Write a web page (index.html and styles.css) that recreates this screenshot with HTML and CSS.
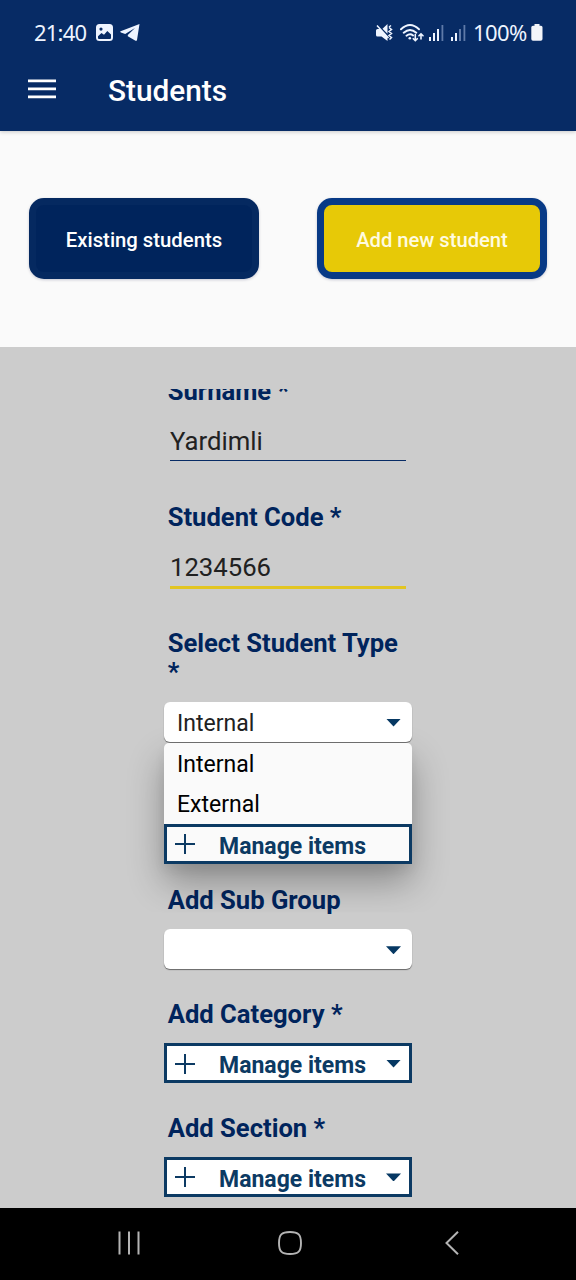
FILE: index.html
```html
<!DOCTYPE html>
<html lang="en">
<head>
<meta charset="utf-8">
<title>Students</title>
<link rel="stylesheet" href="styles.css">
</head>
<body>
<div class="screen">
  <header class="header">
    <div class="status">
      <div class="status-left">
        <span class="clock">21:40</span>
        <svg class="ico-image" width="17" height="17" viewBox="0 0 17 17"><path fill="#eef4ff" fill-rule="evenodd" d="M3.500 0h10A3.500 3.500 0 0 1 17 3.500v10a3.500 3.500 0 0 1-3.500 3.500h-10A3.500 3.500 0 0 1 0 13.500v-10A3.500 3.500 0 0 1 3.500 0zM2 12.300V14q0 1 1 1h11q1 0 1-1V10.500L11.300 7 8 10.700 5.500 9zM5 3.500a1.600 1.600 0 1 0 0 3.200 1.600 1.600 0 0 0 0-3.200z"/></svg>
        <svg class="ico-plane" width="20" height="17" viewBox="0 0 20 17"><path fill="#eef4ff" d="M19.500 0 .6 7.300q-1 .7.300 1.200l4.300 1.500L15 4 7.800 11v1.200l7.700 4.500q1.200.4 1.500-.8z"/></svg>
      </div>
      <div class="status-right">
        <svg class="ico-mute" width="17" height="17" viewBox="0 0 17 17"><path fill="#eef4ff" d="M1.500 5H4l7.500 7.500V17L5.500 12.500h-4Q0 12.500 0 11V6.500Q0 5 1.500 5zM6.500 4.700 11.500 0v9.700z"/><path d="M1 1.500 12.500 14M13 3l2-1.500M13 3.500l2.500 2L13 7.500l2.500 2-2.500 2 2.500 2-2 2" fill="none" stroke="#eef4ff" stroke-width="1.500"/></svg>
        <svg class="ico-wifi" width="24" height="18" viewBox="0 0 24 18"><g fill="none" stroke="#eef4ff" stroke-width="1.900" stroke-linecap="round"><path d="M1 5.300q9-8.400 18 0M3.700 8.700q6.300-5.600 12.600 0M6.500 11.700q3.500-2.900 6.600-.3"/><path d="M15.300 10.500v6M13.300 14.700l2 2 2-2M21 15v-5M19 11.800l2-2 2 2" stroke-width="1.600"/></g><circle cx="9.800" cy="14.300" r="1.300" fill="#eef4ff"/></svg>
        <svg class="ico-sig1" width="15" height="16" viewBox="0 0 15 16"><path fill="#eef4ff" d="M0 12h2v4H0zM4 8h2v8H4zM8 4h2v12H8z"/><path fill="#5f7aa8" d="M12.500 0h1.800v16h-1.800z"/></svg>
        <svg class="ico-sig2" width="15" height="16" viewBox="0 0 15 16"><path fill="#eef4ff" d="M0 12h2v4H0zM4 8h2v8H4z"/><path fill="#5f7aa8" d="M8 4h2v12H8zM12.500 0h1.800v16h-1.800z"/></svg>
        <span class="percent">100%</span>
        <svg class="ico-batt" width="12" height="17" viewBox="0 0 12 17"><path fill="#f3f5fa" d="M3.500 0h5v1.800H10q1.500 0 1.500 1.500V15q0 1.800-1.800 1.800H2Q.3 16.800.3 15V3.300Q.3 1.800 2 1.800h1.500z"/></svg>
      </div>
    </div>
    <div class="appbar">
      <svg width="28" height="20" viewBox="0 0 28 20"><path fill="#fff" d="M0 .5h28v2.700H0zM0 8.500h28v2.700H0zM0 16.500h28v2.700H0z"/></svg>
      <h1 class="title">Students</h1>
    </div>
  </header>
  <nav class="tabs">
    <button class="tab tab-existing">Existing students</button>
    <button class="tab tab-add">Add new student</button>
  </nav>
  <main class="form">
    <div class="scroller">
      <div class="field">
        <div class="label">Surname *</div>
        <div class="input">Yardimli</div>
      </div>
      <div class="field">
        <div class="label">Student Code *</div>
        <div class="input focused">1234566</div>
      </div>
      <div class="field type">
        <div class="label">Select Student Type *</div>
        <div class="select"><span>Internal</span><i class="arrow"></i>
          <div class="menu">
            <div class="option">Internal</div>
            <div class="option">External</div>
            <div class="manage"><i class="plus"></i><span>Manage items</span></div>
          </div>
        </div>
      </div>
      <div class="field drop">
        <div class="label">Add Sub Group</div>
        <div class="select"><i class="arrow"></i></div>
      </div>
      <div class="field drop">
        <div class="label">Add Category *</div>
        <div class="manage"><i class="plus"></i><span>Manage items</span><i class="arrow"></i></div>
      </div>
      <div class="field drop">
        <div class="label">Add Section *</div>
        <div class="manage"><i class="plus"></i><span>Manage items</span><i class="arrow"></i></div>
      </div>
    </div>
  </main>
  <footer class="navbar">
    <svg width="24" height="24" viewBox="0 0 24 24"><path d="M2.500.5v23M12 .5v23M21.500.5v23" stroke="#b4b4b4" stroke-width="2"/></svg>
    <svg class="ico-home" width="24" height="24" viewBox="0 0 24 24"><path d="M12 1c8.500 0 11 2.500 11 11s-2.500 11-11 11S1 20.500 1 12 3.500 1 12 1z" fill="none" stroke="#b4b4b4" stroke-width="1.900"/></svg>
    <svg width="24" height="24" viewBox="0 0 24 24"><path d="M18 .8 6.500 12 18 23.200" fill="none" stroke="#b4b4b4" stroke-width="2"/></svg>
  </footer>
</div>
</body>
</html>
```
FILE: styles.css
```css
* { box-sizing: border-box; }
body { margin: 0; font-family: Roboto, sans-serif; }
.screen { width: 576px; height: 1280px; display: flex; flex-direction: column; overflow: hidden; background: #fafafa; }

.header { height: 131px; flex: none; background: #072b65; box-shadow: 0 1px 4px rgba(0, 0, 0, .2); }
.status { height: 65px; padding: 0 33px 0 34px; display: flex; justify-content: space-between; align-items: center; color: #eef4ff; font: 400 22px/30px "Noto Sans", sans-serif; }
.status-left, .status-right { display: flex; align-items: center; }
.clock { width: 62px; letter-spacing: -.8px; }
.clock, .percent { margin-top: -1px; }
.ico-plane { margin-left: 7px; }
.ico-wifi { margin-left: 7px; }
.ico-sig1 { margin-left: 5px; }
.ico-sig2 { margin-left: 7px; }
.percent { width: 58px; margin-left: 7px; letter-spacing: -.6px; white-space: nowrap; }
.appbar { height: 47px; padding-left: 28px; display: flex; align-items: center; gap: 52px; }
.title { margin: 4px 0 0; color: #fff; font-size: 29.800px; line-height: 36px; font-weight: 500; }

.tabs { height: 216px; flex: none; padding: 67px 29px 0; display: flex; justify-content: space-between; }
.tab { width: 230px; height: 81px; padding: 3px 0 0; border: 7px solid; border-radius: 15px; color: #fff; font: 500 20.300px/24px Roboto, sans-serif; box-shadow: 0 1px 3px rgba(0, 0, 60, .2); }
.tab-existing { background: #00245c; border-color: #052960; }
.tab-add { background: #e7c907; border-color: #083a86; color: #fffbe0; font-size: 20.200px; }

.form { height: 861px; flex: none; padding: 42px 164px 0; background: #ccc; }
.scroller { height: 819px; margin: 0 -60px; padding: 0 60px; overflow: hidden; }
.field { height: 126px; }
.field:first-child { margin-top: -12.500px; }
.type { height: 257.500px; }
.drop { height: 113.900px; }
.label { padding-left: 3.700px; color: #00245c; font-size: 25.600px; line-height: 29.500px; font-weight: 700; }
.type .label { margin-bottom: 14px; }
.drop .label { margin-bottom: 13.700px; }
.input { height: 55px; margin: 0 6px; padding-top: 20px; color: #212121; font-size: 25.700px; line-height: 30px; border-bottom: 1.500px solid #072b65; }
.focused { height: 57px; border-bottom: 3px solid #e2c522; }

.select { position: relative; height: 40px; padding: 2px 11px 0 13px; display: flex; align-items: center; background: #fff; border-radius: 6px; box-shadow: 0 1px 1px rgba(0, 0, 0, .5); color: #212121; font-size: 23px; }
.select > span { margin-top: 2px; }
.arrow { width: 15px; height: 8px; margin-left: auto; background: #063863; clip-path: polygon(0 0, 100% 0, 50% 100%); }
.menu { position: absolute; top: 41px; left: 0; width: 248px; background: #fafafa; border-radius: 5px 5px 0 0; color: #000; box-shadow: 0 18px 36px rgba(0, 0, 0, .32), 0 6px 12px rgba(0, 0, 0, .06); clip-path: polygon(-40px -30px, 0 -30px, 0 0, 248px 0, 248px -30px, 288px -30px, 288px 170px, -40px 170px); }
.option { height: 40.500px; padding: 2px 13px 0; line-height: 40px; }
.manage { height: 40px; padding: 3px 8px 0; display: flex; align-items: center; border: 3px solid #0c3a63; background: #fff; color: #0c3a63; font-size: 23px; font-weight: 700; }
.manage span { margin-top: 2px; }
.menu .manage { background: #fafafa; }
.manage .arrow { margin-top: -2px; }
.plus { width: 20px; height: 20px; margin: -2px 24px 0 0; background: linear-gradient(#0c3a63, #0c3a63) center / 20px 2px no-repeat, linear-gradient(#0c3a63, #0c3a63) center / 2px 20px no-repeat; }

.navbar { height: 72px; flex: none; padding: 0 112px 2px 117px; display: flex; justify-content: space-between; align-items: center; background: #000; }
.ico-home { margin-right: 2px; }
```
